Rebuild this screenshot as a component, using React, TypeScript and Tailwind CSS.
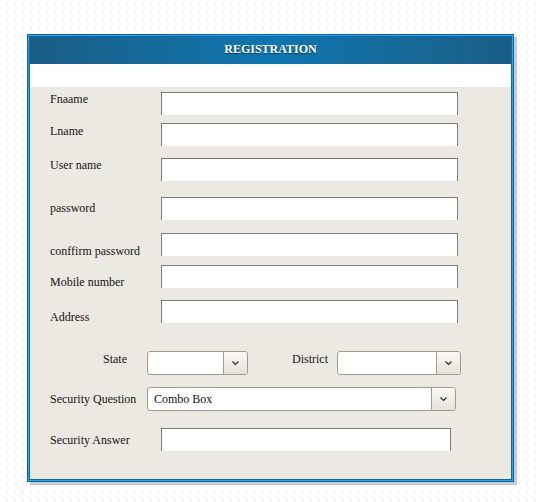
import React from 'react';

const textRows = [
  { label: 'Fnaame', rowClass: 'mt-[5px]', labelClass: 'pt-0' },
  { label: 'Lname', rowClass: 'mt-[8px]', labelClass: 'pt-[1px]' },
  { label: 'User name', rowClass: 'mt-[12px]', labelClass: 'pt-0' },
  { label: 'password', rowClass: 'mt-[16px]', labelClass: 'pt-[4px]' },
  { label: 'conffirm password', rowClass: 'mt-[13px]', labelClass: 'pt-[11px]' },
  { label: 'Mobile number', rowClass: 'mt-[9px]', labelClass: 'pt-[10px]' },
  { label: 'Address', rowClass: 'mt-[12px]', labelClass: 'pt-[10px]' },
];

function Chevron() {
  return (
    <svg width="9" height="6" viewBox="0 0 9 6" fill="none">
      <path d="M1.5 1.5 L4.5 4.5 L7.5 1.5" stroke="#2a2a2a" strokeWidth="1.2" />
    </svg>
  );
}

function ComboBox({ width, value }: { width: string; value?: string }) {
  return (
    <div className={`flex h-[24px] ${width} rounded-[3px] border border-[#a39a88] bg-white`}>
      <div className="flex flex-1 items-center pl-[6px] text-[12px] leading-[14px] text-[#111]">
        {value}
      </div>
      <div className="flex w-[24px] items-center justify-center rounded-r-[3px] border-l border-[#a39a88] bg-gradient-to-b from-[#fbfaf8] to-[#e4e1d8]">
        <Chevron />
      </div>
    </div>
  );
}

function TextBox({ width }: { width: string }) {
  return (
    <div className={`h-[23px] ${width} border-x border-t border-[#7b7b7b] bg-white`} />
  );
}

export default function App() {
  return (
    <div
      className="h-[502px] w-[541px] bg-white bg-[radial-gradient(circle_at_0.5px_0.5px,#d2d2d2_0.7px,transparent_0.9px)] bg-[size:8px_8px] bg-[position:7px_3px] pl-[27px] pt-[34px]"
      style={{ fontFamily: '"Liberation Serif", "Times New Roman", serif' }}
    >
      <div className="w-[487px] border border-[#0b64a6] shadow-[3px_3px_0_#c9c9c9]">
        <div className="border border-[#2fa2ec]">
          <div className="border border-[#0d68a8]">
            <div className="flex h-[27px] items-center justify-center bg-gradient-to-r from-[#1a5d85] via-[#0e76b0] to-[#1a5e86] pb-[4px]">
              <span className="text-[12px] font-bold leading-[14px] text-white [text-shadow:0_1px_1px_#0b3550]">
                REGISTRATION
              </span>
            </div>
            <div className="h-[23px] bg-white" />
            <div className="flex h-[392px] flex-col bg-[#ece9e2] text-[12px] leading-[14px] text-[#141414]">
              {textRows.map((row) => (
                <div key={row.label} className={`flex h-[23px] items-start pl-[20px] ${row.rowClass}`}>
                  <div className={`w-[111px] ${row.labelClass}`}>{row.label}</div>
                  <TextBox width="w-[297px]" />
                </div>
              ))}

              <div className="mt-[28px] flex h-[24px] items-start">
                <div className="ml-[73px] w-[44px] pt-[1px]">State</div>
                <ComboBox width="w-[101px]" />
                <div className="ml-[44px] w-[45px] pt-[1px]">District</div>
                <ComboBox width="w-[124px]" />
              </div>

              <div className="mt-[12px] flex h-[24px] items-center pl-[20px]">
                <div className="w-[97px]">Security Question</div>
                <ComboBox width="w-[309px]" value="Combo Box" />
              </div>

              <div className="mt-[17px] flex h-[23px] items-center pl-[20px]">
                <div className="w-[111px]">Security Answer</div>
                <TextBox width="w-[290px]" />
              </div>
            </div>
          </div>
        </div>
      </div>
    </div>
  );
}
